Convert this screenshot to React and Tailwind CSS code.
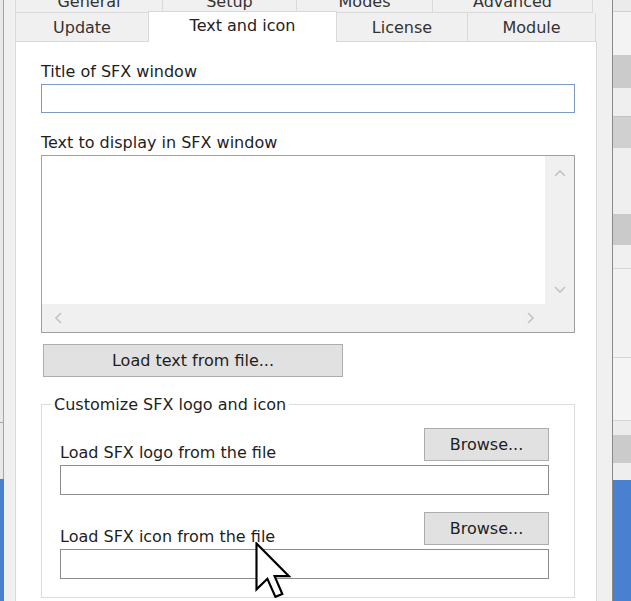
import React from 'react';

const font = "font-['DejaVu_Sans',sans-serif]";

function Chevron({ dir }) {
  // small scrollbar arrow, drawn as an open chevron
  const paths = {
    up: 'M1 7 L6 2 L11 7',
    down: 'M1 2 L6 7 L11 2',
    left: 'M7 1 L2 6 L7 11',
    right: 'M2 1 L7 6 L2 11',
  };
  const vertical = dir === 'up' || dir === 'down';
  return (
    <svg
      width={vertical ? 12 : 9}
      height={vertical ? 9 : 12}
      viewBox={vertical ? '0 0 12 9' : '0 0 9 12'}
      fill="none"
      stroke="#c3c3c3"
      strokeWidth="1.6"
    >
      <path d={paths[dir]} />
    </svg>
  );
}

function Cursor() {
  return (
    <svg
      className="absolute left-[253px] top-[542px]"
      width="40"
      height="56"
      viewBox="-0.5 -0.5 12.5 19.5"
    >
      <path
        d="M0 0 L0 16 L3.8 12.3 L6.6 18.6 L9 17.6 L6.3 11.4 L11.3 11.4 Z"
        fill="#ffffff"
        stroke="#000000"
        strokeWidth="0.75"
        strokeLinejoin="miter"
      />
    </svg>
  );
}

function RightStrip() {
  const bands = [
    ['h-[11px]', 'bg-[#ebebeb]'],
    ['h-[1px]', 'bg-[#d0d0d0]'],
    ['h-[43px]', 'bg-[#f3f3f3]'],
    ['h-[33px]', 'bg-[#cbcbcb]'],
    ['h-[28px]', 'bg-[#efefef]'],
    ['h-[1px]', 'bg-[#c4c4c4]'],
    ['h-[31px]', 'bg-[#d0d0d0]'],
    ['h-[66px]', 'bg-[#efefef]'],
    ['h-[31px]', 'bg-[#cacaca]'],
    ['h-[23px]', 'bg-[#f0f0f0]'],
    ['h-[1px]', 'bg-[#d6d6d6]'],
    ['h-[88px]', 'bg-[#f2f2f2]'],
    ['h-[1px]', 'bg-[#d6d6d6]'],
    ['h-[62px]', 'bg-[#f4f4f4]'],
    ['h-[1px]', 'bg-[#d6d6d6]'],
    ['h-[14px]', 'bg-[#ececec]'],
    ['h-[28px]', 'bg-[#cbcbcb]'],
    ['h-[17px]', 'bg-[#eeeeee]'],
  ];
  return (
    <div className="w-[19px] flex flex-col border-l border-[#8a8a8a]">
      {bands.map(([h, bg], i) => (
        <div key={i} className={`${h} ${bg}`} />
      ))}
      <div className="flex-1 bg-[#4a80d0]" />
    </div>
  );
}

export default function App() {
  const topTabs = [
    ['General', 'w-[148px]'],
    ['Setup', 'w-[135px]'],
    ['Modes', 'w-[137px]'],
    ['Advanced', 'w-[161px]'],
  ];

  return (
    <div className={`relative flex w-[631px] h-[601px] overflow-hidden bg-[#f0f0f0] text-[16px] leading-[19px] text-[#1e1e1e] ${font}`}>
      {/* left edge of the window behind */}
      <div className="w-[4px] flex flex-col">
        <div className="h-[422px] bg-[#e9e9e9] border-r border-[#a5a5a5]" />
        <div className="h-[57px] bg-[#e9e9e9] border-r border-t border-[#a5a5a5]" />
        <div className="flex-1 bg-[#4a80d0]" />
      </div>

      {/* dialog */}
      <div className="w-[608px] flex flex-col pl-[11px]">
        {/* top tab row, cut off by the frame */}
        <div className="flex h-[28px] -mt-[15px] w-[582px]">
          {topTabs.map(([label, w]) => (
            <div
              key={label}
              className={`${w} h-full bg-[#f0f0f0] border-l border-r -mr-[1px] border-b border-[#d9d9d9] text-center pt-[7px] text-[#333]`}
            >
              {label}
            </div>
          ))}
        </div>

        {/* bottom tab row */}
        <div className="flex items-end h-[28px] w-[582px]">
          <div className="w-[133px] h-[28px] bg-[#f0f0f0] border-l border-[#d9d9d9] text-center pt-[5px] text-[#333]">
            Update
          </div>
          <div className="relative z-10 w-[189px] h-[31px] -mb-[1px] bg-white border-l border-r border-t border-[#d9d9d9] text-center pt-[4px] text-[#222]">
            Text and icon
          </div>
          <div className="w-[131px] h-[28px] bg-[#f0f0f0] border-r border-[#d9d9d9] text-center pt-[5px] text-[#333]">
            License
          </div>
          <div className="w-[128px] h-[28px] bg-[#f0f0f0] border-r border-[#d9d9d9] text-center pt-[5px] text-[#333]">
            Module
          </div>
        </div>

        {/* tab page */}
        <div className="flex-1 w-[582px] bg-white border border-b-0 border-[#d9d9d9] pl-[25px] pr-[21px] pt-[20px] flex flex-col">
          <div>Title of SFX window</div>
          <div className="mt-[3px] h-[29px] border border-[#7a9bc2] bg-white" />

          <div className="mt-[20px]">Text to display in SFX window</div>
          <div className="mt-[3px] h-[178px] border border-[#a0a0a0] flex flex-col">
            <div className="flex-1 flex">
              <div className="flex-1 bg-white" />
              <div className="w-[29px] bg-[#f0f0f0] flex flex-col items-center justify-between pt-[13px] pb-[10px]">
                <Chevron dir="up" />
                <Chevron dir="down" />
              </div>
            </div>
            <div className="h-[28px] flex bg-[#f0f0f0]">
              <div className="flex-1 flex items-center justify-between pl-[12px] pr-[10px]">
                <Chevron dir="left" />
                <Chevron dir="right" />
              </div>
              <div className="w-[29px]" />
            </div>
          </div>

          <button className="mt-[11px] ml-[2px] w-[300px] h-[33px] bg-[#e1e1e1] border border-[#adadad] text-center">
            Load text from file...
          </button>

          <fieldset className="mt-[18px] border border-[#dcdcdc] pl-[18px] pr-[25px] pb-[18px]">
            <legend className="-ml-[9px] px-[3px]">Customize SFX logo and icon</legend>

            <div className="pt-[14px] flex items-end justify-between">
              <div className="-mb-[1px]">Load SFX logo from the file</div>
              <button className="w-[125px] h-[33px] bg-[#e1e1e1] border border-[#adadad]">Browse...</button>
            </div>
            <div className="mt-[4px] h-[30px] border border-[#8c8c8c] bg-white" />

            <div className="mt-[17px] flex items-end justify-between">
              <div className="-mb-[1px]">Load SFX icon from the file</div>
              <button className="w-[125px] h-[33px] bg-[#e1e1e1] border border-[#adadad]">Browse...</button>
            </div>
            <div className="mt-[4px] h-[30px] border border-[#8c8c8c] bg-white" />
          </fieldset>
        </div>
      </div>

      <RightStrip />
      <Cursor />
    </div>
  );
}
